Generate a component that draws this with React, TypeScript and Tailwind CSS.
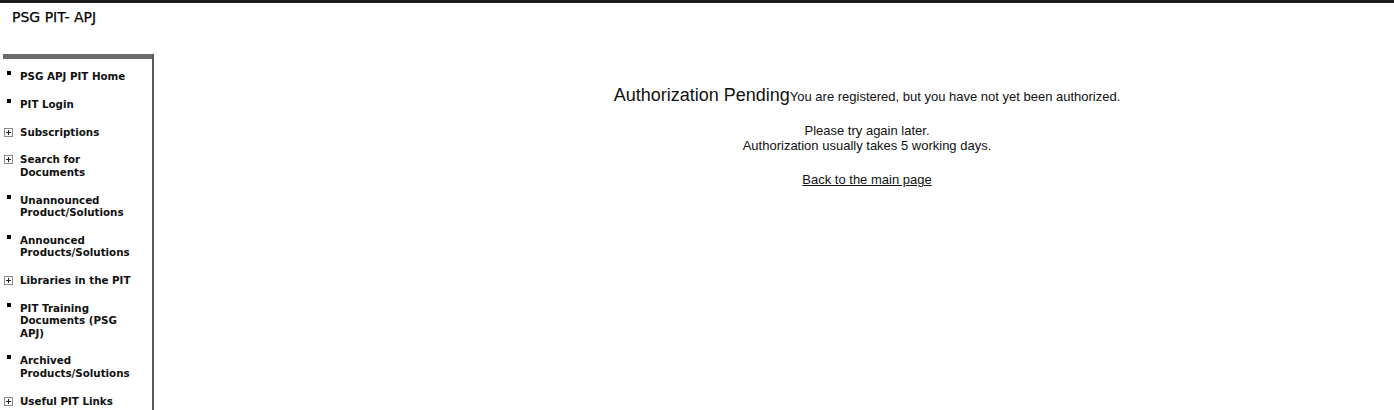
const navItems = [
  { label: ["PSG APJ PIT Home"], expand: false },
  { label: ["PIT Login"], expand: false },
  { label: ["Subscriptions"], expand: true },
  { label: ["Search for", "Documents"], expand: true },
  { label: ["Unannounced", "Product/Solutions"], expand: false },
  { label: ["Announced", "Products/Solutions"], expand: false },
  { label: ["Libraries in the PIT"], expand: true },
  { label: ["PIT Training", "Documents (PSG", "APJ)"], expand: false },
  { label: ["Archived", "Products/Solutions"], expand: false },
  { label: ["Useful PIT Links"], expand: true },
];

function PlusBox() {
  return (
    <svg width="9" height="9" viewBox="0 0 9 9" className="block">
      <rect x="0.5" y="0.5" width="8" height="8" fill="white" stroke="#8a8a8a" />
      <path d="M2 4.5h5M4.5 2v5" stroke="#222" strokeWidth="1" />
    </svg>
  );
}

export default function App() {
  return (
    <div className="h-[410px] w-[1394px] overflow-hidden bg-white">
      <div className="h-[3px] bg-[#1c1c1c]" />
      <div className="h-[51px] pl-[12px] pt-[6px]">
        <div className="text-[14px] leading-[16px] text-black font-['DejaVu_Sans',sans-serif] [-webkit-text-stroke:0.25px_black]">
          PSG PIT- APJ
        </div>
      </div>

      <div className="flex">
        <aside className="ml-[3px] w-[151px] shrink-0 border-r-2 border-[#5a5a5a] h-[360px]">
          <div className="h-[5px] bg-[#6b6b6b]" />
          <ul className="pt-[11px] font-['DejaVu_Sans',sans-serif] text-[10.3px] font-bold leading-[12.4px] text-[#111]">
            {navItems.map((item) => (
              <li key={item.label.join(" ")} className="mb-[15.4px] flex">
                <div className="w-[17px] shrink-0">
                  {item.expand ? (
                    <div className="ml-[1px] mt-[2px]">
                      <PlusBox />
                    </div>
                  ) : (
                    <div className="ml-[4px] mt-[1px] h-[4px] w-[4px] bg-black" />
                  )}
                </div>
                <div>
                  {item.label.map((line) => (
                    <div key={line}>{line}</div>
                  ))}
                </div>
              </li>
            ))}
          </ul>
        </aside>

        <main className="flex-1 pl-[186px] pt-[30px] text-center font-['Liberation_Sans',Arial,sans-serif] text-[#111]">
          <p className="leading-[22px]">
            <span className="text-[18px]">Authorization Pending</span>
            <span className="text-[13px]">You are registered, but you have not yet been authorized.</span>
          </p>
          <p className="mt-[15px] text-[13px] leading-[15px]">
            Please try again later.
            <br />
            Authorization usually takes 5 working days.
          </p>
          <p className="mt-[19px] text-[13px] leading-[15px]">
            <a href="#" className="underline text-[#111]">
              Back to the main page
            </a>
          </p>
        </main>
      </div>
    </div>
  );
}
